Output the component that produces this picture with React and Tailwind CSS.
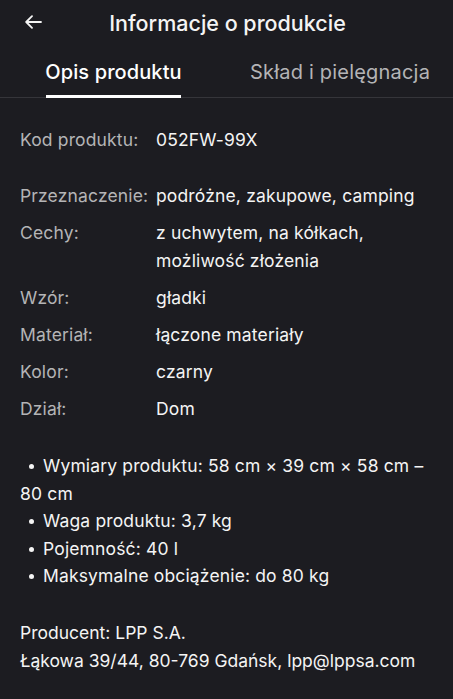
import React from "react";

const rows = [
  { label: "Przeznaczenie:", value: "podróżne, zakupowe, camping" },
  { label: "Cechy:", value: "z uchwytem, na kółkach, możliwość złożenia" },
  { label: "Wzór:", value: "gładki" },
  { label: "Materiał:", value: "łączone materiały" },
  { label: "Kolor:", value: "czarny" },
  { label: "Dział:", value: "Dom" },
];

const bullets = [
  "Wymiary produktu: 58 cm × 39 cm × 58 cm – 80 cm",
  "Waga produktu: 3,7 kg",
  "Pojemność: 40 l",
  "Maksymalne obciążenie: do 80 kg",
];

const Row = ({ label, value }) => (
  <div className="flex">
    <div className="w-[136px] shrink-0 whitespace-nowrap text-[#b4b4b6]">{label}</div>
    <div className="text-[#f4f4f4]">{value}</div>
  </div>
);

export default function App() {
  return (
    <div
      className="min-h-screen w-[453px] bg-[#1c1c21] text-[#f4f4f4]"
      style={{ fontFamily: "Inter, 'Noto Sans', sans-serif" }}
    >
      {/* naglowek */}
      <div className="relative flex h-[46px] items-center justify-center">
        <button className="absolute left-[25px] top-[15px] text-[#f4f4f4]">
          <svg width="17" height="14" viewBox="0 0 17 14" fill="none" stroke="currentColor" strokeWidth="1.8" strokeLinecap="round" strokeLinejoin="round">
            <path d="M16 7H1.5M7 1.2L1.2 7l5.8 5.8" />
          </svg>
        </button>
        <h1 className="pl-[2px] text-[21.5px] font-medium">Informacje o produkcie</h1>
      </div>

      {/* zakladki */}
      <div className="flex h-[52px] border-b border-[#35353a] pl-[46px] text-[20px]">
        <div className="relative flex w-[135px] items-center justify-center whitespace-nowrap font-medium tracking-[0.1px] text-white">
          Opis produktu
          <span className="absolute bottom-[-1px] left-0 right-0 h-[3px] bg-white"></span>
        </div>
        <div className="ml-[69px] flex items-center whitespace-nowrap tracking-[0.2px] text-[#b4b4b6]">
          Skład i pielęgnacja
        </div>
      </div>

      <div className="px-5 text-[17.5px] leading-[28px] tracking-[0.15px]">
        <div className="mt-[28px]">
          <Row label="Kod produktu:" value="052FW-99X" />
        </div>

        <div className="mt-[28px] flex flex-col gap-[9px]">
          {rows.map((r) => (
            <Row key={r.label} label={r.label} value={r.value} />
          ))}
        </div>

        <ul className="mt-[29px] leading-[27.5px]">
          {bullets.map((b) => (
            <li key={b}>
              <span className="ml-[9px] mr-[9px] inline-block h-[5px] w-[5px] translate-y-[-3px] rounded-full bg-[#f4f4f4]"></span>
              {b}
            </li>
          ))}
        </ul>

        <div className="mt-[29px] tracking-[0px]">
          <p>Producent: LPP S.A.</p>
          <p>Łąkowa 39/44, 80-769 Gdańsk, lpp@lppsa.com</p>
        </div>
      </div>
    </div>
  );
}
